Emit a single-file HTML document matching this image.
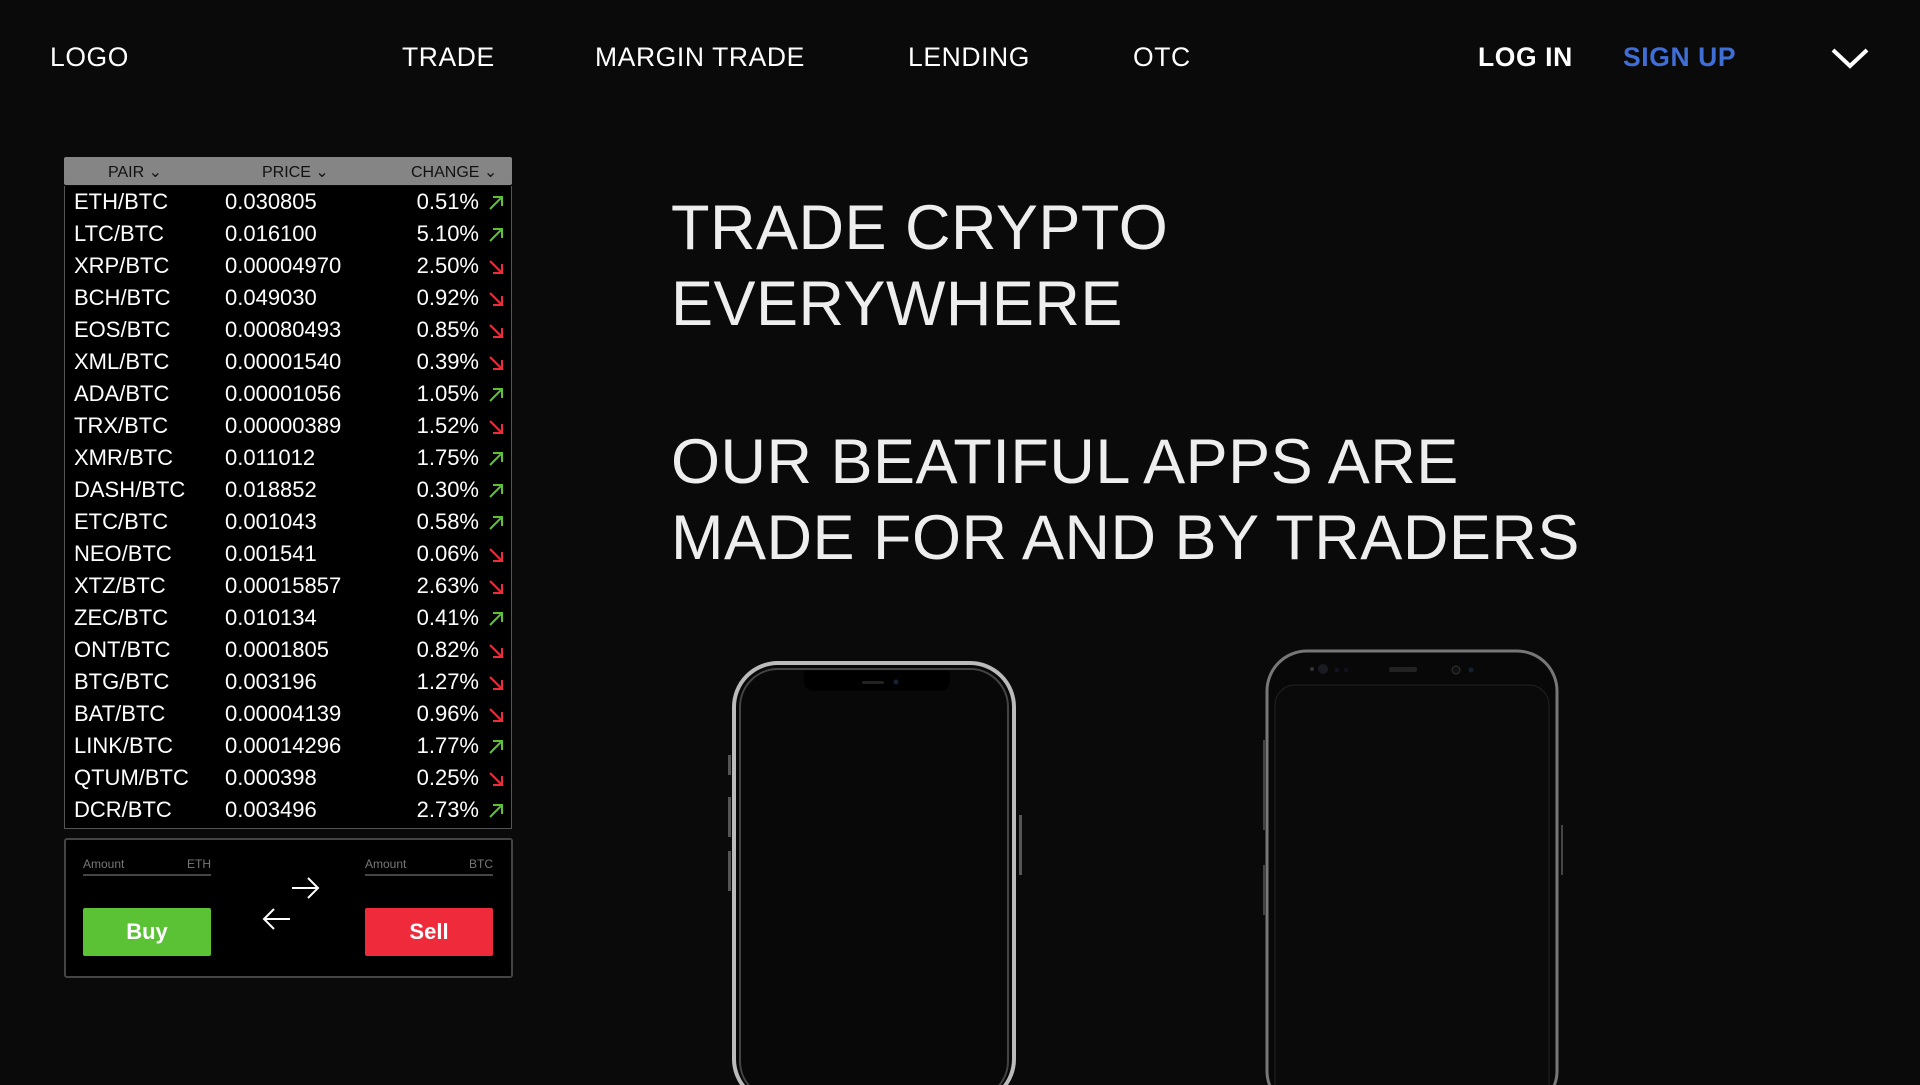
<!DOCTYPE html>
<html><head><meta charset="utf-8"><style>
*{margin:0;padding:0;box-sizing:border-box}
body{width:1920px;height:1080px;background:#0a0a0a;color:#fff;font-family:"Liberation Sans",sans-serif;overflow:hidden;position:relative}
.nav{position:absolute;top:42px;font-size:26.5px;letter-spacing:0.6px;white-space:nowrap}
.tbl{position:absolute;left:64px;top:157px;width:448px}
.hd{height:28px;background:#858585;border-radius:2px;position:relative;font-size:16px;color:#111}
.hd span{position:absolute;top:5px}
.body{background:#000;border:1px solid #555;border-top:none;height:643px;position:relative;margin-top:1px}
.row{position:absolute;left:0;width:100%;height:32px;font-size:22px;line-height:32px}
.row .p{position:absolute;left:9px}
.row .v{position:absolute;left:160px}
.row .c{position:absolute;right:32px}
.row svg{position:absolute;right:7px;top:9px}
.box{position:absolute;left:64px;top:838px;width:449px;height:140px;border:2px solid #444;border-radius:3px;background:#000}
.amt{position:absolute;top:17px;width:128px;border-bottom:2px solid #444;font-size:12px;color:#777;height:19px}
.amt b{font-weight:normal;position:absolute;right:0}
.btn{position:absolute;top:68px;width:128px;height:48px;border-radius:2px;font-weight:bold;font-size:22px;text-align:center;line-height:48px}
.h{position:absolute;left:671px;font-size:63px;font-weight:300;color:#eee;letter-spacing:0.5px;white-space:nowrap;line-height:76px}
</style></head><body>
<div class="nav" style="left:50px">LOGO</div>
<div class="nav" style="left:402px">TRADE</div>
<div class="nav" style="left:595px">MARGIN TRADE</div>
<div class="nav" style="left:908px">LENDING</div>
<div class="nav" style="left:1133px">OTC</div>
<div class="nav" style="left:1478px;font-weight:bold">LOG IN</div>
<div class="nav" style="left:1623px;color:#3f6fd6;font-weight:bold">SIGN UP</div>
<svg style="position:absolute;left:1830px;top:46px" width="40" height="24"><path d="M3 4 L20 20 L37 4" stroke="#fff" stroke-width="4" fill="none"/></svg>

<div class="tbl">
<div class="hd"><span style="left:44px">PAIR ⌄</span><span style="left:198px">PRICE ⌄</span><span style="left:347px">CHANGE ⌄</span></div>
<div class="body" id="b"></div>
</div>

<div class="box">
<div class="amt" style="left:17px">Amount<b>ETH</b></div>
<div class="amt" style="left:299px">Amount<b>BTC</b></div>
<svg style="position:absolute;left:190px;top:30px" width="70" height="70"><path d="M36 18 H62 M52 8 L62 18 L52 28" stroke="#fff" stroke-width="2" fill="none"/><path d="M34 49 H8 M18 39 L8 49 L18 59" stroke="#fff" stroke-width="2" fill="none"/></svg>
<div class="btn" style="left:17px;background:#5bc236">Buy</div>
<div class="btn" style="left:299px;background:#ee2a3b">Sell</div>
</div>

<div class="h" style="top:190px">TRADE CRYPTO<br>EVERYWHERE</div>
<div class="h" style="top:424px">OUR BEATIFUL APPS ARE<br>MADE FOR AND BY TRADERS</div>

<svg style="position:absolute;left:726px;top:655px" width="305" height="430">
<rect x="8" y="8" width="280" height="440" rx="44" fill="#080808" stroke="#bbb" stroke-width="4"/>
<rect x="14" y="14" width="268" height="430" rx="38" fill="none" stroke="#444" stroke-width="2"/>
<path d="M78 16 V26 Q78 36 90 36 H212 Q224 36 224 26 V16 Z" fill="#000"/>
<rect x="136" y="26" width="22" height="3" rx="1.5" fill="#222"/>
<circle cx="170" cy="27" r="2.5" fill="#123"/>
<rect x="2" y="100" width="3" height="20" fill="#555"/><rect x="2" y="142" width="3" height="40" fill="#555"/><rect x="2" y="196" width="3" height="40" fill="#555"/>
<rect x="293" y="160" width="3" height="60" fill="#555"/>
</svg>
<svg style="position:absolute;left:1259px;top:645px" width="310" height="440">
<rect x="8" y="6" width="290" height="460" rx="40" fill="#080808" stroke="#777" stroke-width="3"/>
<rect x="16" y="40" width="274" height="420" rx="20" fill="#0a0a0a" stroke="#222" stroke-width="1"/>
<circle cx="53" cy="24" r="2" fill="#333"/><circle cx="64" cy="24" r="5" fill="#1a1a22"/><circle cx="78" cy="25" r="2.5" fill="#112"/><circle cx="87" cy="25" r="2" fill="#112"/>
<rect x="130" y="22" width="28" height="5" rx="2" fill="#222"/>
<circle cx="197" cy="25" r="4" fill="#111" stroke="#333"/><circle cx="212" cy="25" r="2.5" fill="#123"/>
<rect x="4" y="95" width="2" height="90" fill="#444"/><rect x="4" y="220" width="2" height="50" fill="#444"/><rect x="302" y="180" width="2" height="50" fill="#444"/>
</svg>

<script>
var d=[["ETH/BTC","0.030805","0.51%",1],["LTC/BTC","0.016100","5.10%",1],["XRP/BTC","0.00004970","2.50%",0],["BCH/BTC","0.049030","0.92%",0],["EOS/BTC","0.00080493","0.85%",0],["XML/BTC","0.00001540","0.39%",0],["ADA/BTC","0.00001056","1.05%",1],["TRX/BTC","0.00000389","1.52%",0],["XMR/BTC","0.011012","1.75%",1],["DASH/BTC","0.018852","0.30%",1],["ETC/BTC","0.001043","0.58%",1],["NEO/BTC","0.001541","0.06%",0],["XTZ/BTC","0.00015857","2.63%",0],["ZEC/BTC","0.010134","0.41%",1],["ONT/BTC","0.0001805","0.82%",0],["BTG/BTC","0.003196","1.27%",0],["BAT/BTC","0.00004139","0.96%",0],["LINK/BTC","0.00014296","1.77%",1],["QTUM/BTC","0.000398","0.25%",0],["DCR/BTC","0.003496","2.73%",1]];
var h="";d.forEach(function(r,i){var a=r[3]?'<path d="M2 14 L14 2 M5 2 H14 V11" stroke="#5bc236" stroke-width="2" fill="none"/>':'<path d="M2 2 L14 14 M5 14 H14 V5" stroke="#ee2a3b" stroke-width="2" fill="none"/>';
h+='<div class="row" style="top:'+(i*32)+'px"><span class="p">'+r[0]+'</span><span class="v">'+r[1]+'</span><span class="c">'+r[2]+'</span><svg width="16" height="16">'+a+'</svg></div>';});
document.getElementById("b").innerHTML=h;
</script>
</body></html>
